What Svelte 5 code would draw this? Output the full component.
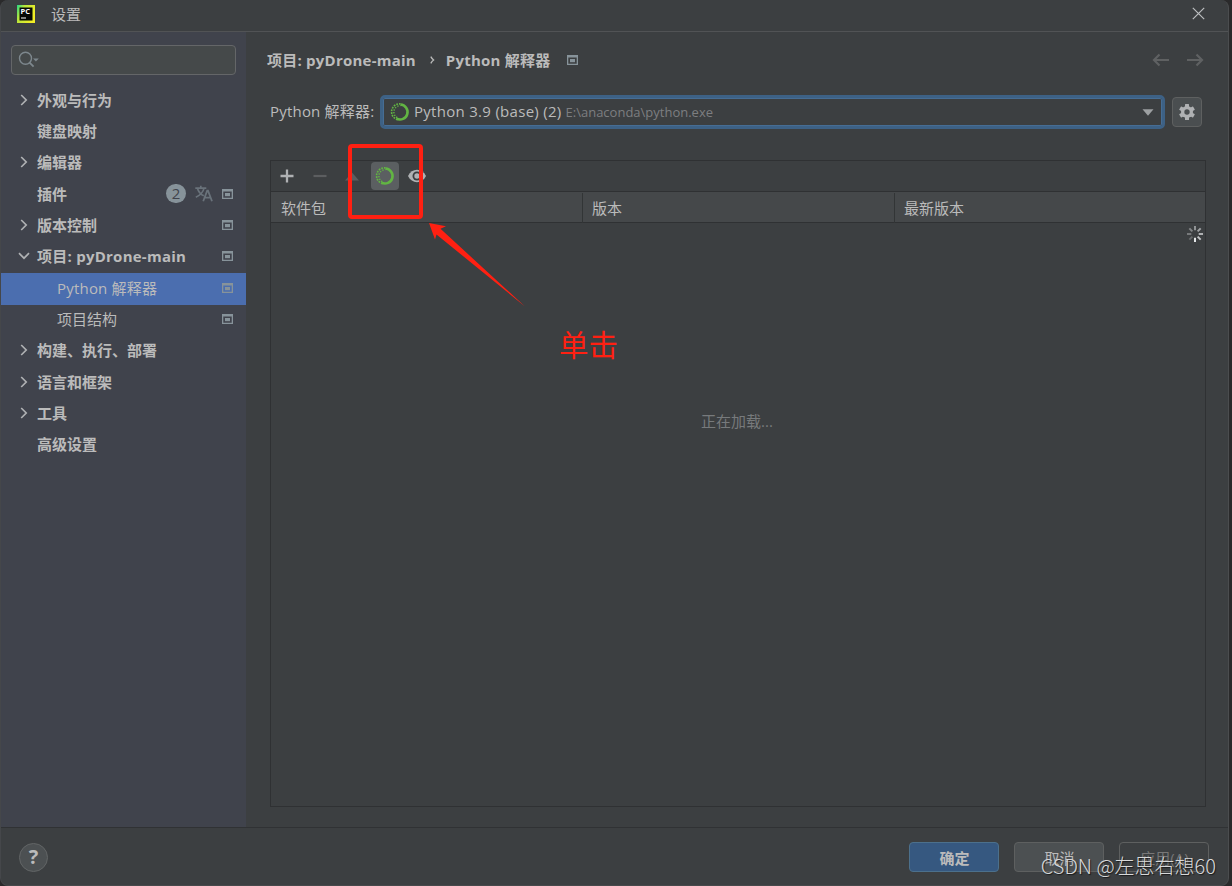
<script>
    let query = "";

    const items = [
        { label: "外观与行为", arrow: "right" },
        { label: "键盘映射" },
        { label: "编辑器", arrow: "right" },
        { label: "插件", badge: 2, lang: true, project: true },
        { label: "版本控制", arrow: "right", project: true },
        { label: "项目: pyDrone-main", arrow: "down", project: true },
        { label: "Python 解释器", child: true, project: true, selected: true },
        { label: "项目结构", child: true, project: true },
        { label: "构建、执行、部署", arrow: "right" },
        { label: "语言和框架", arrow: "right" },
        { label: "工具", arrow: "right" },
        { label: "高级设置" },
    ];

    const columns = ["软件包", "版本", "最新版本"];

    // spinner spokes, clockwise from the top
    const spokes = [0.5, 0.6, 0.68, 0.8, 1, 0.25, 0.35, 0.42];
</script>

{#snippet projectIcon()}
    <svg class="project-icon" width="11" height="10" viewBox="0 0 11 10">
        <path
            fill="#87939a"
            fill-rule="evenodd"
            d="M0 0h11v10H0zM1.3 2.6v6.1h8.4V2.6z"
        />
        <rect x="3" y="4" width="5" height="3.2" fill="#87939a" />
    </svg>
{/snippet}

{#snippet condaIcon()}
    <svg class="conda" width="20" height="20" viewBox="0 0 20 20" fill="none">
        <path d="M10.5 2.5A7.5 7.5 0 1 1 6.5 16.6" stroke="#62b543" stroke-width="2.6" />
        <path
            d="M7.6 17.6A8 8 0 0 1 10.5 1.9"
            stroke="#62b543"
            stroke-width="1.6"
            stroke-dasharray="1.8 1"
        />
        <path
            d="M7.2 15.6A6.4 6.4 0 0 1 10.5 3.6"
            stroke="#62b543"
            stroke-width="1.4"
            stroke-dasharray="1.3 1.4"
        />
    </svg>
{/snippet}

<div class="dialog">
    <header class="titlebar">
        <svg width="18" height="18" viewBox="0 0 18 18">
            <defs>
                <linearGradient id="pc" x1="0" y1="0" x2="1" y2="0.5">
                    <stop offset="0" stop-color="#21d789" />
                    <stop offset="0.35" stop-color="#b8e63c" />
                    <stop offset="1" stop-color="#f2ee25" />
                </linearGradient>
            </defs>
            <rect width="18" height="18" fill="url(#pc)" />
            <rect x="2.5" y="2.5" width="13" height="13" fill="#050805" />
            <text x="3.5" y="9" class="logo-text">PC</text>
            <rect x="4" y="12.5" width="5" height="1" fill="#fff" />
        </svg>
        <span class="title">设置</span>
        <svg class="close" width="13" height="13" viewBox="0 0 13 13">
            <path d="M.8.8l11.4 11.4M12.2.8L.8 12.2" stroke="#bbbdbf" stroke-width="1.2" />
        </svg>
    </header>

    <div class="body">
        <aside class="sidebar">
            <label class="search">
                <svg width="22" height="18" viewBox="0 0 22 18" fill="none">
                    <circle cx="7.5" cy="7.3" r="6" stroke="#7d878d" stroke-width="1.4" />
                    <path d="M11.6 11.6l4 4" stroke="#7d878d" stroke-width="1.8" />
                    <path d="M15 7.4h5.8L17.9 10.6z" fill="#7d878d" />
                </svg>
                <input bind:value={query} />
            </label>

            <ul class="tree">
                {#each items as item}
                    <li
                        class:child={item.child}
                        class:selected={item.selected}
                        class:open={item.arrow === "down"}
                    >
                        <span class="arrow">
                            {#if item.arrow === "right"}
                                <svg width="8" height="12" viewBox="0 0 8 12" fill="none">
                                    <path d="M1.2 1l5 5-5 5" stroke="#afb1b3" stroke-width="1.7" />
                                </svg>
                            {:else if item.arrow === "down"}
                                <svg width="12" height="8" viewBox="0 0 12 8" fill="none">
                                    <path d="M1 1.2l5 5 5-5" stroke="#afb1b3" stroke-width="1.7" />
                                </svg>
                            {/if}
                        </span>
                        <span class="label">{item.label}</span>
                        {#if item.badge}
                            <span class="badge">{item.badge}</span>
                        {/if}
                        {#if item.lang}
                            <svg class="lang" width="18" height="17" viewBox="0 0 18 17" fill="none">
                                <path
                                    d="M.3 3.2h11M5.8.8v2.4M2.5 3.4c1 3.6 3.3 6 6.3 7.4M9 3.4C8 7.2 5 10.4.8 12.2"
                                    stroke="#69727a"
                                    stroke-width="1.7"
                                />
                                <path
                                    d="M8.2 16.2l4-10.6h.8l4 10.6M9.6 12.7h6"
                                    stroke="#69727a"
                                    stroke-width="1.8"
                                />
                            </svg>
                        {/if}
                        {#if item.project}
                            {@render projectIcon()}
                        {/if}
                    </li>
                {/each}
            </ul>
        </aside>

        <main class="content">
            <div class="crumbs">
                <span>项目: pyDrone-main</span>
                <svg class="sep" width="5" height="8" viewBox="0 0 5 8" fill="none">
                    <path d="M.8.6Q2 2.8 3.6 4 2 5.2.8 7.4" stroke="#bbb" stroke-width="1.3" />
                </svg>
                <span>Python 解释器</span>
                {@render projectIcon()}
                <svg class="nav" width="52" height="14" viewBox="0 0 52 14" fill="none">
                    <path
                        d="M17 7H2M7.5 1.5L2 7l5.5 5.5M35 7h15M44.5 1.5L50 7l-5.5 5.5"
                        stroke="#5f6162"
                        stroke-width="2.2"
                    />
                </svg>
            </div>

            <div class="interpreter">
                <span class="caption">Python 解释器:</span>
                <div class="combo">
                    {@render condaIcon()}
                    <span class="env">Python 3.9 (base) (2)</span>
                    <span class="path">E:\anaconda\python.exe</span>
                    <svg class="drop" width="12" height="7" viewBox="0 0 12 7">
                        <path d="M.5.3h11L6 6.7z" fill="#9da0a2" />
                    </svg>
                </div>
                <button class="gear" aria-label="设置">
                    <svg width="18" height="18" viewBox="-9 -9 18 18">
                        <g fill="#afb1b3">
                            {#each [0, 60, 120] as angle}
                                <rect
                                    x="-2"
                                    y="-8"
                                    width="4"
                                    height="16"
                                    rx=".5"
                                    transform="rotate({angle})"
                                />
                            {/each}
                            <circle r="6" />
                        </g>
                        <circle r="2.7" fill="#4a4e50" />
                    </svg>
                </button>
            </div>

            <section class="packages">
                <div class="toolbar">
                    <svg width="14" height="14" viewBox="0 0 14 14">
                        <path d="M7 .5v13M.5 7h13" stroke="#afb1b3" stroke-width="2.3" />
                    </svg>
                    <svg width="14" height="14" viewBox="0 0 14 14">
                        <path d="M.5 7h13" stroke="#5c5e60" stroke-width="2.2" />
                    </svg>
                    <svg class="up" width="14" height="9" viewBox="0 0 14 9">
                        <path d="M7 .5L14 8.5H0z" fill="#5c5e60" />
                    </svg>
                    <span class="toggle">{@render condaIcon()}</span>
                    <svg class="eye" width="18" height="14" viewBox="0 0 18 14">
                        <path
                            d="M0 7C2 3 5.2.8 9 .8S16 3 18 7c-2 4-5.2 6.2-9 6.2S2 11 0 7z"
                            fill="#afb1b3"
                        />
                        <circle cx="9" cy="7" r="4.5" fill="#3c3f41" />
                        <circle cx="9" cy="7" r="2.7" fill="#afb1b3" />
                    </svg>

                    <div class="highlight"></div>
                </div>
                <div class="columns">
                    {#each columns as column}
                        <div>{column}</div>
                    {/each}
                </div>
                <div class="rows">
                    <span class="loading">正在加载...</span>
                    <svg class="spinner" width="18" height="18" viewBox="-9 -9 18 18">
                        {#each spokes as opacity, i}
                            <path
                                d="M0-3.7V-8"
                                stroke="#e4e6e8"
                                stroke-width="2"
                                {opacity}
                                transform="rotate({i * 45})"
                            />
                        {/each}
                    </svg>

                    <svg class="pointer" width="96" height="84" viewBox="0 0 96 84">
                        <path
                            d="M0 0L17 3.2 11.5 5.8 96 83.5 7.5 11.5 6 16.5z"
                            fill="#ff2012"
                        />
                    </svg>
                    <span class="note">单击</span>
                </div>
            </section>
        </main>
    </div>

    <footer class="footer">
        <button class="help">?</button>
        <button class="btn primary">确定</button>
        <button class="btn">取消</button>
        <button class="btn disabled">应用(A)</button>
        <span class="watermark">CSDN @左思右想60</span>
    </footer>
</div>

<style>
    :global(body) {
        background: #2a2a2b;
    }

    .dialog {
        box-sizing: border-box;
        width: 1229px;
        height: 886px;
        display: flex;
        flex-direction: column;
        background: #3c3f41;
        border-left: 1px solid #45474a;
        border-right: 1px solid #4b4d4f;
        border-bottom: 1px solid #47494b;
        border-radius: 8px;
        overflow: hidden;
        color: #bbbbbb;
        font-family: "Open Sans", "Noto Sans CJK SC", sans-serif;
        font-size: 15px;
        line-height: 20px;
    }

    svg {
        display: block;
        flex: none;
    }

    button {
        padding: 0;
        font: inherit;
        color: inherit;
    }

    .titlebar {
        box-sizing: border-box;
        height: 32px;
        flex: none;
        display: flex;
        align-items: center;
        padding: 0 23px 4px 16px;
        border-bottom: 1px solid #515355;
    }

    .logo-text {
        fill: #fff;
        font-family: "Open Sans", sans-serif;
        font-size: 7.5px;
        font-weight: 700;
    }

    .title {
        margin-left: 16px;
    }

    .close {
        margin-left: auto;
    }

    .body {
        flex: 1;
        display: flex;
        min-height: 0;
    }

    .sidebar {
        width: 245px;
        flex: none;
        background: #40434c;
    }

    .search {
        box-sizing: border-box;
        display: flex;
        align-items: center;
        width: 225px;
        height: 30px;
        margin: 13px 10px 10px;
        padding-left: 6px;
        background: #45494a;
        border: 1px solid #646668;
        border-radius: 4px;
    }

    .search input {
        flex: 1;
        min-width: 0;
        border: none;
        outline: none;
        background: none;
        color: inherit;
        font: inherit;
    }

    .tree {
        list-style: none;
        margin: 0;
        padding: 0;
        font-weight: 700;
    }

    .tree li {
        box-sizing: border-box;
        height: 31.3px;
        display: flex;
        align-items: center;
        padding: 0 13px 1.6px 0;
    }

    .tree .child {
        font-weight: 400;
    }

    .tree .selected {
        background: #4b6eaf;
        box-shadow: 0 1px #4b6eaf;
    }

    .arrow {
        width: 18px;
        margin: 0 4px 0 14px;
        display: flex;
        justify-content: center;
    }

    .child .arrow {
        margin-right: 24px;
    }

    .label {
        flex: 1;
        white-space: nowrap;
    }

    .open .label {
        letter-spacing: 0.25px;
    }

    .selected .label {
        letter-spacing: 0.2px;
    }

    .badge {
        width: 20px;
        height: 19px;
        border-radius: 10px;
        background: #87939a;
        color: #40434c;
        font-weight: 400;
        line-height: 19px;
        text-align: center;
    }

    .lang {
        margin: 0 9px;
    }

    .content {
        flex: 1;
        display: flex;
        flex-direction: column;
        padding: 15px 22px 20px 24px;
    }

    .crumbs {
        display: flex;
        align-items: center;
        height: 26px;
        margin: 0 2px 0 -3px;
        font-weight: 700;
        letter-spacing: 0.23px;
    }

    .sep {
        margin: 0 11px 0 14px;
    }

    .crumbs .project-icon {
        margin-left: 16px;
    }

    .nav {
        margin-left: auto;
    }

    .interpreter {
        display: flex;
        align-items: center;
        height: 34px;
        margin-top: 22px;
    }

    .caption {
        width: 110px;
        padding-bottom: 2px;
        letter-spacing: 0.2px;
        white-space: nowrap;
    }

    .combo {
        box-sizing: border-box;
        width: 785px;
        height: 34px;
        display: flex;
        align-items: center;
        padding: 0 8px 0 7px;
        border: 3px solid #3d6185;
        border-radius: 5px;
        box-shadow: inset 0 0 0 1px #466d94;
    }

    .env {
        margin-left: 4px;
        padding-bottom: 2px;
        letter-spacing: 0.29px;
    }

    .path {
        margin-left: 4px;
        color: #7c7e80;
        font-size: 13px;
    }

    .drop {
        margin-left: auto;
    }

    .gear {
        box-sizing: border-box;
        width: 30px;
        height: 30px;
        margin-left: 7px;
        display: flex;
        align-items: center;
        justify-content: center;
        background: #4a4e50;
        border: 1px solid #5e6060;
        border-radius: 4px;
    }

    .packages {
        flex: 1;
        margin-top: 31px;
        display: flex;
        flex-direction: column;
        border: 1px solid #2f3133;
    }

    .toolbar {
        position: relative;
        height: 30px;
        display: flex;
        align-items: center;
        padding-left: 9px;
        border-bottom: 1px solid #2f3133;
    }

    .toolbar > svg + svg {
        margin-left: 19px;
    }

    .toolbar .up {
        margin-left: 18px;
    }

    .toggle {
        width: 28px;
        height: 28px;
        margin: 0 9px 0 12px;
        display: flex;
        align-items: center;
        justify-content: center;
        background: #5b5f61;
        border-radius: 4px;
    }

    .highlight {
        position: absolute;
        left: 77px;
        top: -17px;
        box-sizing: border-box;
        width: 75px;
        height: 75px;
        border: 4px solid #ff2012;
        border-radius: 4px;
        z-index: 1;
    }

    .columns {
        height: 30px;
        display: grid;
        grid-template-columns: 312px 312px 1fr;
        background: #45484a;
        border-bottom: 1px solid #2f3133;
    }

    .columns div {
        margin: 1px 0;
        padding-left: 9px;
        line-height: 30px;
        border-right: 1px solid #323536;
    }

    .columns div:first-child {
        padding-left: 10px;
    }

    .columns div:last-child {
        border-right: none;
    }

    .rows {
        position: relative;
        flex: 1;
    }

    .loading {
        position: absolute;
        left: 0;
        right: 2px;
        top: 188px;
        text-align: center;
        color: #777a7c;
    }

    .spinner {
        position: absolute;
        right: 1px;
        top: 2px;
    }

    .pointer {
        position: absolute;
        left: 158px;
        top: 0;
    }

    .note {
        position: absolute;
        left: 288px;
        top: 102px;
        color: #ff2012;
        font-size: 29.5px;
        line-height: 40px;
    }

    .footer {
        position: relative;
        box-sizing: border-box;
        height: 58px;
        flex: none;
        display: flex;
        align-items: center;
        gap: 15px;
        padding: 1px 19px 0 18px;
        border-top: 1px solid #303234;
    }

    .help {
        box-sizing: border-box;
        width: 29px;
        height: 29px;
        margin-right: auto;
        border: 1px solid #626566;
        border-radius: 50%;
        background: #4c5052;
        font-size: 20px;
        font-weight: 700;
        line-height: 26px;
    }

    .btn {
        box-sizing: border-box;
        width: 90px;
        height: 30px;
        padding: 2px 0 0 1px;
        background: #4c5052;
        border: 1px solid #5e6060;
        border-radius: 4px;
    }

    .primary {
        background: #365880;
        border-color: #4c708c;
        font-weight: 700;
    }

    .disabled {
        background: none;
        color: #777777;
    }

    .watermark {
        position: absolute;
        right: 12px;
        top: 24px;
        font-family: "Noto Sans CJK SC", sans-serif;
        font-size: 20px;
        font-weight: 300;
        line-height: 28px;
        color: #d8d9da;
        text-shadow: 1px 1px 1px rgba(0, 0, 0, 0.6);
        white-space: nowrap;
    }
</style>
